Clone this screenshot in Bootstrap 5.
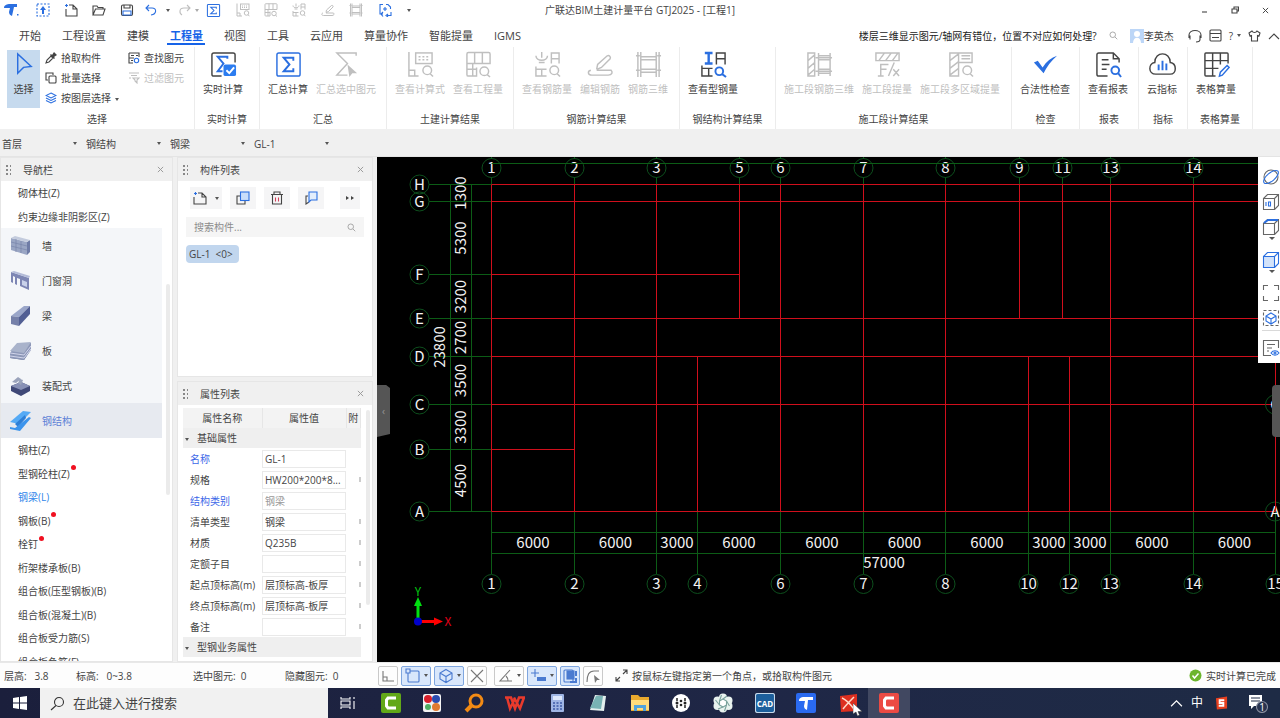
<!DOCTYPE html>
<html lang="zh-CN">
<head>
<meta charset="utf-8">
<meta name="viewport" content="width=device-width, initial-scale=1">
<title>广联达BIM土建计量平台 GTJ2025</title>
<link href="https://cdn.jsdelivr.net/npm/bootstrap@5.3.0/dist/css/bootstrap.min.css" rel="stylesheet">
<style>
:root{--ink:#444;--blue:#2b6fe0;--pale:#bfbfbf;--chrome:#f0f0f0}
body{font:10px/16px "Open Sans","Noto Sans CJK SC",sans-serif;color:var(--ink);background:#fff;height:100vh;min-height:600px;overflow:hidden}
button{border:0;background:none;padding:0;color:inherit;line-height:16px}
a{color:inherit;text-decoration:none}
svg{fill:none;stroke:currentColor;stroke-width:1.1;flex:none;display:block}
.fillic{fill:currentColor;stroke:none}
.thick{stroke-width:2}
.caret{width:0;height:0;border:2px solid transparent;border-top:3px solid #555;border-bottom:0;flex:none;vertical-align:middle}
.blue{color:var(--blue)}.pale{color:var(--pale)}.dim{color:#999}
.orange{color:#f28a14}.wps{color:#e93a2c}
/* title bar */
.titlebar{height:20px}
.logo-cell{width:29px;padding-left:3px}
.qa{width:28px;height:20px}.qa.wide{width:29px}
.qa-set{width:200px}
.winbtn{width:30px;height:18px}
/* tabs */
.tabs{height:27px;font-size:11px;gap:21px;padding-left:19px}
.tabs a{line-height:18px;padding:7px 0 0;height:26px;white-space:nowrap}
.tabs a.on{color:#1663e8;font-weight:700;position:relative}
.tabs a.on::after{content:"";position:absolute;left:-3px;right:-2px;bottom:1px;height:2px;background:#1663e8}
.tip-line{width:238px;overflow:hidden;color:#222}
.tip-find{margin:0 12px}
.usertools{margin-left:14px;gap:7px}
/* ribbon */
.ribbon{display:grid;grid-template-columns:195px 65px 127px 127px 166px 96px 236px 68px 59px 49px 65px 1fr;height:82px}
.rgroup{border-right:1px solid #ececec;padding:3px 0 0 8px;display:flex;flex-direction:column}
.rgroup:last-child{border:0}
.rgroup .tools{display:flex;gap:8px;height:59px}
.rgroup .tools.near{gap:5px}
.rgroup .cap{margin-left:-8px;text-align:center;line-height:20px}
.big{display:flex;flex-direction:column;align-items:center;gap:3px;white-space:nowrap;height:58px;padding-top:1px}
.big svg{width:27px;height:27px;stroke-width:1.5}
.big.sel{background:#c6daee;width:33px;margin-left:-1px}
.mini{display:flex;align-items:flex-start;gap:4px;height:20px;white-space:nowrap}
.mini svg{width:12px;height:12px;margin-top:2px}
.mini .caret{margin-top:8px}
/* combo bar */
.combos{height:28px;background:var(--chrome);border-bottom:1px solid #e4e4e4}
.combos select{width:84px;height:27px;border:0;padding:2px 14px 0 2px;background:var(--chrome) url("data:image/svg+xml,%3Csvg xmlns='http://www.w3.org/2000/svg' width='4' height='3'%3E%3Cpath d='M0 0h4L2 3z' fill='%23555'/%3E%3C/svg%3E") no-repeat 73px 13px;appearance:none;font-size:10px;color:var(--ink)}
/* docks */
.workspace{background:var(--chrome);gap:4px}
.dock{background:#fff;border:1px solid #e6e6e6;overflow:hidden}
.navdock{width:173px}
.sidecol{width:196px;gap:4px}
.dockhead{height:23px;background:var(--chrome);padding:0 8px 0 4px}
.grip{width:6px;height:12px;background:radial-gradient(circle,#888 1px,transparent 1px) 0 0/4px 4px}
.navlist{list-style:none;margin:0;padding:0}
.leaf li{height:24px;padding-left:17px;display:flex;align-items:center}
.leaf li:nth-child(even){height:23px}
.leaf .hot::after{content:"";width:5px;height:5px;border-radius:50%;background:#f01020;margin:0 0 12px 1px}
.leaf .cur{color:#2f86ea}
.cats{width:161px;background:#f4f6f9}
.cats a{height:35px;padding-left:8px;gap:11px;display:flex;align-items:center}
.cats svg{width:22px;height:22px}
.cats .cur{background:#e7eaf0;color:#5b7fd6}
.thumb{position:absolute;right:2px;width:4px;background:#ebebeb;border-radius:2px}
.toolrow{padding:6px 12px 0;gap:8px}
.tool{height:22px;background:#f5f5f6;width:26px;display:flex;align-items:center;justify-content:center}
.tool.slim{width:20px}
.tool svg{width:14px;height:14px}
.searchbox{background:#f5f5f5;height:20px}
.searchbox input,.props input{border:0;background:none;font-size:10px;color:var(--ink);outline:0;min-width:0}
.searchbox input::placeholder{color:#8c8c8c}
.pick{background:#c1d6ee;width:53px;height:18px;line-height:18px;padding-left:3px}
.upper{height:220px}
.props{width:178px;table-layout:fixed;border-collapse:collapse;margin:3px 0 0 5px}
.props .c1{width:79px}.props .c2{width:84px}
.props th,.props td{padding:0;font-weight:400;height:21px;line-height:16px}
.props thead th,.props .sect th{height:20px;background:#f3f3f3}
.props thead th{text-align:center;border-right:1px solid #e6e6e6}
.props tbody th{padding-left:7px}
.props .sect th{padding-left:2px;background:#efefef}
.props td:nth-child(2) input{width:84px;height:18px;border:1px solid #e9e9e9;padding:0 2px;text-overflow:ellipsis}
.props .key{color:#3c67e8}
.props input:disabled{color:#999}
.nub{display:block;width:2px;height:5px;background:#ccc;margin-left:auto}
/* drawing area */
.stage{background:#000;min-width:0}
.stage>svg{width:100%;height:100%}
.stage text{font:15px "Noto Sans CJK SC",sans-serif;fill:#f2f2f2;stroke:none;text-anchor:middle}
.stage .ax{stroke:#d00f1c;stroke-width:1}
.stage .dm{stroke:#0c5c16;stroke-width:1}
.stage .bub{stroke:#0d4f1d;stroke-width:1}
.stage .ucs{font-size:12px}
.pull{position:absolute;top:228px;width:13px;height:52px;background:#555;color:#999}
.pull.l{left:0;clip-path:polygon(0 0,70% 0,100% 6%,100% 94%,0 100%)}
.pull.r{right:0;width:8px;border-radius:4px 0 0 4px}
.viewbar{position:absolute;right:0;top:0;width:22px;height:206px;background:#fff;color:#666;overflow:hidden;padding:7px 0 0 4px}
.viewbar button{display:block;height:25px}
.viewbar svg{width:18px;height:18px}
.viewbar .caret{margin:-2px 0 7px 7px;border-width:3px}
.viewbar .caret+button{height:25px}
/* status */
.status{height:26px;background:#fdfdfd;border-top:1px solid #e8e8e8}
.sfield{white-space:pre}
.counts{display:grid;grid-template-columns:76px 117px 92px 93px}
.snaps{gap:3px}
.snap{width:20px;height:20px;border:1px solid #c9c9c9;border-radius:2px;display:flex;align-items:center;justify-content:center;gap:3px;color:#777}
.snap.drop{width:30px}
.snap.on{background:#d9e7fb;border-color:#7fa6df;color:#4a7ad0}
.snap svg{width:16px;height:16px}
.hint{margin-left:12px;gap:4px}
/* taskbar */
.taskbar{height:30px;background:linear-gradient(90deg,#1b1f3c,#1f2746 60%,#1e2b45);color:#fff}
.start{width:40px}
.tsearch{width:288px;background:#f1f1f1;color:#333;padding-left:10px;gap:8px}
.tsearch input{border:0;background:none;outline:0;font-size:13px;min-width:0}
.tsearch input::placeholder{color:#444;opacity:1}
.apps{width:540px;margin-left:2px}
.apps button.now{background:#414861}
.apps svg,.tray svg{width:20px;height:20px}
.apps .pointer{position:absolute;left:26px;top:15px;width:9px;height:13px}
.tray .small-ic{width:13px}
.tray .ime{font-size:12px}
</style>
<script src="https://cdn.jsdelivr.net/npm/bootstrap@5.3.0/dist/js/bootstrap.bundle.min.js"></script>
</head>
<body class="d-flex flex-column">
<svg width="0" height="0" class="position-absolute" aria-hidden="true">
  <symbol id="sigma" viewBox="0 0 16 16"><rect x="1.500" y="1.500" width="13" height="13" rx="1"/><path d="M11 6V4.500H5L8.500 8 5 11.500h6V10"/></symbol>
  <symbol id="calcgrid" viewBox="0 0 28 28"><path d="M12 17v9H3.500A1.500 1.500 0 0 1 2 24.500V3a1.500 1.500 0 0 1 1.500-1.500h21A1.500 1.500 0 0 1 26 3v10H2M10 1.500V13M18 1.500V13M8 13v13M2 19h10"/><circle cx="20" cy="21" r="4.500"/><path d="m23 24.500 3 2.500"/></symbol>
  <symbol id="formula" viewBox="0 0 28 28"><path d="M2 1v25h10M2 20h6v6"/><rect x="9" y="2" width="17" height="11"/><path d="M12 6h12M12 9h12" stroke-dasharray="2 2"/><circle cx="21" cy="20" r="4.500"/><path d="m24 23.500 3 3"/></symbol>
  <symbol id="rebarq" viewBox="0 0 28 28"><path d="M8 1v6M2 5c0 6 12 6 12 0M5 12h6M2 16v10h11M2 19h11M8 19v7M18 13V2h8v11M18 8h8"/><circle cx="21" cy="20" r="4.500"/><path d="m24 23.500 3 3"/></symbol>
  <symbol id="rebared" viewBox="0 0 28 28"><path d="m10 19 1-5L21 5c2-1 4 1 3 3l-9 9-5 2M4 20c-4 1-3 5 1 5h17c4 0 5-3 3-5H10"/></symbol>
  <symbol id="rebar3" viewBox="0 0 28 28"><path d="M3 1v26M25 1v26M6 1v26M22 1v26M6 6h16M6 9h16M6 19h16M6 22h16M1 5h4M1 20h4M23 5h4M23 20h4"/></symbol>
  <symbol id="mag" viewBox="0 0 12 12"><circle cx="5" cy="5" r="3.700"/><path d="m8 8 3 3"/></symbol>
  <symbol id="x" viewBox="0 0 8 8"><path d="m1 1 6 6M7 1 1 7"/></symbol>
  <symbol id="cube" viewBox="0 0 18 18"><path d="M1.500 5.500h11v11h-11zM1.500 5.500l4-4h11v11l-4 4M12.500 5.500l4-4"/></symbol>
</svg>

<header class="titlebar d-flex align-items-center position-relative">
  <div class="logo-cell"><svg class="fillic blue" width="17" height="16" viewBox="0 0 17 16"><path d="M1 6C1 3 4 2 7 2h7v3h-3l-2 9c-2-1-3-2-3-4l1-4zM14 12h1.500v1.500H14z"/></svg></div>
  <button class="qa d-flex align-items-center justify-content-center blue" aria-label="框选"><svg width="14" height="14" viewBox="0 0 14 14"><rect x="1" y="1" width="12" height="12" stroke-dasharray="2 1.500"/><path class="fillic" d="M7 3l3 4H8v4H6V7H4z"/></svg></button>
  <button class="qa d-flex align-items-center justify-content-center" aria-label="新建"><svg width="14" height="14" viewBox="0 0 14 14"><path d="M5 2h4l4 4v7H2V6M9 2v4h4"/><path class="blue" d="M2.500 1v3M1 2.500h3"/></svg></button>
  <button class="qa d-flex align-items-center justify-content-center" aria-label="打开"><svg width="14" height="14" viewBox="0 0 14 14"><path d="M1 12V3h4l1 1.500h5V6M1 12l2.500-6H13l-2 6z"/></svg></button>
  <button class="qa d-flex align-items-center justify-content-center" aria-label="保存"><svg width="14" height="14" viewBox="0 0 14 14"><rect x="1.500" y="2" width="11" height="10.500" rx="1.500"/><path d="M4 2v3h6V2"/><path class="blue" d="M3 8h8v4H3z"/></svg></button>
  <button class="qa wide d-flex align-items-center justify-content-end gap-2" aria-label="撤销"><svg class="blue" width="13" height="12" viewBox="0 0 13 12"><path d="M4 1 1 4l3 3M1 4h6c5 0 5 6-1 7"/></svg><span class="caret"></span></button>
  <button class="qa wide d-flex align-items-center justify-content-end gap-1 pale" aria-label="恢复"><svg width="13" height="12" viewBox="0 0 13 12"><path d="m9 1 3 3-3 3M12 4H6C1 4 1 9 4 11"/></svg><span class="caret opacity-50"></span></button>
  <div class="qa-set d-flex">
    <button class="flex-fill d-flex justify-content-center blue" aria-label="汇总计算"><svg width="15" height="15"><use href="#sigma"/></svg></button>
    <button class="flex-fill d-flex justify-content-center pale" aria-label="查看计算式"><svg class="thick" width="14" height="14" viewBox="0 0 28 28"><use href="#formula"/></svg></button>
    <button class="flex-fill d-flex justify-content-center pale" aria-label="查看工程量"><svg class="thick" width="14" height="14" viewBox="0 0 28 28"><use href="#calcgrid"/></svg></button>
    <button class="flex-fill d-flex justify-content-center pale" aria-label="查看钢筋量"><svg class="thick" width="14" height="14" viewBox="0 0 28 28"><use href="#rebarq"/></svg></button>
    <button class="flex-fill d-flex justify-content-center pale" aria-label="编辑钢筋"><svg class="thick" width="14" height="14" viewBox="0 0 28 28"><use href="#rebared"/></svg></button>
    <button class="flex-fill d-flex justify-content-center pale" aria-label="钢筋三维"><svg class="thick" width="14" height="14" viewBox="0 0 28 28"><use href="#rebar3"/></svg></button>
    <button class="flex-fill d-flex justify-content-center blue" aria-label="刷新"><svg width="14" height="14" viewBox="0 0 14 14"><path d="M5 1.500H2V11h3M8 1.500h2l2.500 2.500V6M9 12.500h4V9M5 13.500l-2-2.500 2-2M10 14l-2-1.500L10 11M5 6h4M7 4v4"/></svg></button>
  </div>
  <button class="p-1 ms-1" aria-label="自定义快速访问栏"><span class="caret d-block"></span></button>
  <div class="position-absolute start-50 translate-middle-x">广联达BIM土建计量平台 GTJ2025 - [工程1]</div>
  <div class="ms-auto d-flex">
    <button class="winbtn d-flex align-items-center justify-content-center" aria-label="最小化"><svg width="8" height="8"><path d="M1 6h5"/></svg></button>
    <button class="winbtn d-flex align-items-center justify-content-center" aria-label="还原"><svg width="8" height="8"><path d="M1 3h5v4H1zM3 3V1h4.500v4H6"/></svg></button>
    <button class="winbtn d-flex align-items-center justify-content-center" aria-label="关闭"><svg width="7" height="7" viewBox="0 0 8 8"><use href="#x"/></svg></button>
  </div>
</header>

<div class="d-flex align-items-center">
  <nav class="tabs d-flex">
    <a href="#">开始</a><a href="#">工程设置</a><a href="#">建模</a><a href="#" class="on">工程量</a><a href="#">视图</a><a href="#">工具</a><a href="#">云应用</a><a href="#">算量协作</a><a href="#">智能提量</a><a href="#">IGMS</a>
  </nav>
  <div class="ms-auto d-flex align-items-center pt-1">
    <a href="#" class="tip-line d-flex justify-content-end text-nowrap">楼层三维显示图元/轴网有错位，位置不对应如何处理?</a>
    <svg class="dim tip-find" width="9" height="9"><use href="#mag"/></svg>
    <svg width="14" height="14" viewBox="0 0 14 14" class="fillic"><path fill="#bcd6f7" d="M0 0h14v14H0z"/><circle cx="7" cy="5" r="3" fill="#fff"/><path fill="#fff" d="M3 14c0-7 8-7 8 0z"/></svg>
    <span>李英杰</span>
    <div class="usertools d-flex align-items-center">
    <svg width="14" height="14" viewBox="0 0 14 14"><path d="M1 9V6c0-6 12-6 12 0v3M2 6.500v4M12 6.500v4c0 2-2 2.500-4 2.500"/></svg>
    <svg width="13" height="13" viewBox="0 0 13 13"><rect x="1" y="1" width="11" height="11" rx="1"/><path d="M1 4.500h11M3 8.500h7" stroke-dasharray="11 0"/></svg>
    <span class="d-flex align-items-center gap-1">?<span class="caret"></span></span>
    <svg width="13" height="12" viewBox="0 0 13 12"><path d="M4 1 1 3l1 3 1.500-.5V11h6V5.500L11 6l1-3-3-2c-1 2-4 2-5 0z"/></svg>
    <svg width="12" height="8"><path d="m1 7 5-5 5 5"/></svg>
    </div>
  </div>
</div>

<section class="ribbon">
  <div class="rgroup"><div class="tools near">
    <button class="big sel"><svg class="blue" viewBox="0 0 28 28"><path d="M8 3v20l6-6 8-1z"/></svg>选择</button>
    <div>
      <button class="mini"><svg viewBox="0 0 12 12"><path d="m1 11 1-3 4-4 2 2-4 4z"/><path class="fillic" d="m5 3 1-1 1 1 2-3 3 3-3 2 1 1-1 1z"/></svg>拾取构件</button>
      <button class="mini"><svg viewBox="0 0 12 12"><path d="M3 8H1V1h7v2"/><rect x="4" y="4" width="7" height="7" rx="1"/></svg>批量选择</button>
      <button class="mini"><svg class="blue" viewBox="0 0 12 12"><path d="m6 1 5 2.500L6 6 1 3.500zM1 6l5 2.500L11 6M1 8.500 6 11l5-2.500"/></svg>按图层选择 <span class="caret"></span></button>
    </div>
    <div class="ps-1">
      <button class="mini"><svg viewBox="0 0 12 12"><path d="M1 1h10v4M1 1v10h4M3 3.500h3M8 3.500h2M1 6h5M3 8.500h2"/><circle class="blue" cx="8.500" cy="8.500" r="2.200"/></svg>查找图元</button>
      <button class="mini pale"><svg viewBox="0 0 12 12"><path d="M1 1h10M3 3.500h6M5 6h6L9 8v3L7 9V8zM1 6h2"/></svg>过滤图元</button>
    </div></div><div class="cap">选择</div></div>
  <div class="rgroup"><div class="tools"><button class="big"><svg viewBox="0 0 28 28"><path d="M12 26H4a2 2 0 0 1-2-2V4a2 2 0 0 1 2-2h20a2 2 0 0 1 2 2v8"/><path class="blue" d="M18 8V6H8l6 7-6 8h5" stroke-width="2"/><rect x="14" y="14" width="13" height="12" rx="2" fill="#2b7cf0" stroke="none"/><path stroke="#fff" stroke-width="2" d="m17 20 3 3 5-6"/></svg>实时计算</button></div><div class="cap">实时计算</div></div>
  <div class="rgroup"><div class="tools"><button class="big"><svg class="blue" viewBox="0 0 28 28"><rect x="2" y="2" width="24" height="24" rx="2"/><path stroke-width="2" d="M19 10V7H9l6 7-6 7h10v-3"/></svg><span>汇总计算</span></button><button class="big pale"><svg viewBox="0 0 28 28"><path d="M24 5V2H4l11 11L4 25h11"/><path class="fillic" d="m15 14 10 9-5 0-3 4z"/></svg>汇总选中图元</button></div><div class="cap">汇总</div></div>
  <div class="rgroup"><div class="tools"><button class="big pale"><svg><use href="#formula"/></svg>查看计算式</button><button class="big pale"><svg><use href="#calcgrid"/></svg>查看工程量</button></div><div class="cap">土建计算结果</div></div>
  <div class="rgroup"><div class="tools"><button class="big pale"><svg><use href="#rebarq"/></svg>查看钢筋量</button><button class="big pale"><svg><use href="#rebared"/></svg>编辑钢筋</button><button class="big pale"><svg><use href="#rebar3"/></svg>钢筋三维</button></div><div class="cap">钢筋计算结果</div></div>
  <div class="rgroup"><div class="tools"><button class="big"><svg viewBox="0 0 28 28"><path class="blue" stroke-width="2.500" d="M5 2h8M9 2v11M5 13h8"/><path d="M17 14V2h9v12M17 8h9M2 15v11h11M2 18h11M9 18v8"/><g class="blue" stroke-width="2"><circle cx="20" cy="21" r="4"/><path d="m23 24 4 3"/></g></svg>查看型钢量</button></div><div class="cap">钢结构计算结果</div></div>
  <div class="rgroup"><div class="tools"><button class="big pale"><svg viewBox="0 0 28 28"><path d="M2 2h7v24H2zM2 10l7-6M2 18l7-6M2 25l7-6M13 2v24M25 2v24M13 5h12M13 9h12M13 19h12M13 23h12M10 7h17M10 21h17"/></svg>施工段钢筋三维</button><button class="big pale"><svg viewBox="0 0 28 28"><path d="M2 2h24v8H2zM5 10l6-8M12 10l6-8M19 10l6-8M4 26h6M7 26V14h8M7 19h6M15 26l6-14M20 19l6 7M26 19l-6 7"/></svg>施工段提量</button><button class="big pale"><svg viewBox="0 0 28 28"><path d="M3 2h9v24H3zM3 10l9-7M3 18l9-7M3 25l9-7M12 2h14v10H12M15 5h9M15 8h9"/><circle cx="21" cy="20" r="4.500"/><path d="m24 23.500 3 3"/></svg>施工段多区域提量</button></div><div class="cap">施工段计算结果</div></div>
  <div class="rgroup"><div class="tools"><button class="big"><svg class="fillic blue" viewBox="0 0 28 28"><path d="m2 12 4-2 5 7C15 11 20 7 26 5 20 10 15 17 12 23z"/></svg>合法性检查</button></div><div class="cap">检查</div></div>
  <div class="rgroup"><div class="tools"><button class="big"><svg viewBox="0 0 28 28"><path d="M13 26H4a2 2 0 0 1-2-2V4a2 2 0 0 1 2-2h15l6 6v4M19 2v6h6M7 9h7M7 14h8M7 19h5"/><g class="blue" stroke-width="2"><circle cx="21" cy="20" r="4"/><path d="m24 23 3 4"/></g></svg>查看报表</button></div><div class="cap">报表</div></div>
  <div class="rgroup"><div class="tools"><button class="big"><svg viewBox="0 0 28 28"><path d="M7 24C-1 24-1 13 6 12 6 0 22 0 22 12c7 1 7 12 0 12z"/><path class="blue" stroke-width="2" d="M10 14v6M14 10v10M18 13v7"/></svg>云指标</button></div><div class="cap">指标</div></div>
  <div class="rgroup"><div class="tools"><button class="big"><svg viewBox="0 0 28 28"><path d="M26 13V3a1 1 0 0 0-1-1H3a1 1 0 0 0-1 1v22a1 1 0 0 0 1 1h10M2 10h24M2 18h14M10 2v24M18 2v12"/><path class="blue" d="m17 26 1-4 7-7 2 2-7 8z"/></svg>表格算量</button></div><div class="cap">表格算量</div></div>
  <div class="rgroup"></div>
</section>

<div class="combos d-flex">
  <select aria-label="楼层"><option>首层</option></select>
  <select aria-label="构件类别"><option>钢结构</option></select>
  <select aria-label="构件类型"><option>钢梁</option></select>
  <select aria-label="构件"><option>GL-1</option></select>
</div>

<main class="workspace d-flex flex-fill overflow-hidden">
  <aside class="dock navdock flex-shrink-0 position-relative">
    <div class="dockhead d-flex align-items-center"><span class="grip"></span><span class="ms-2 ps-1">导航栏</span><button class="ms-auto dim" aria-label="关闭导航栏"><svg width="7" height="7"><use href="#x"/></svg></button></div>
    <ul class="navlist leaf"><li><a href="#">砌体柱(Z)</a></li><li><a href="#">约束边缘非阴影区(Z)</a></li></ul>
    <nav class="cats">
      <a href="#"><svg class="fillic" viewBox="0 0 22 22"><path fill="#9aa6c4" d="M2 3l16 4v13L2 15z"/><path fill="#6f7ca6" d="m18 7 3-2v12l-3 3z"/><path fill="#c3cbdd" d="m2 3 4-2 15 4-3 2z"/><path stroke="#7885ab" stroke-width=".7" fill="none" d="M2 7l16 4M2 11l16 4M7 4v13M12 6v12"/></svg>墙</a>
      <a href="#"><svg class="fillic" viewBox="0 0 22 22"><path fill="#7d86b4" d="m2 2 18 6v12l-9-4V9L8 8v7l-2-1V7L4 6v7l-2-1z"/><path fill="#c9d2ea" d="m13 10 5 2v5l-5-2z"/><path fill="#b3bbd8" d="m2 2 3-1 16 5-1 2z"/></svg>门窗洞</a>
      <a href="#"><svg class="fillic" viewBox="0 0 22 22"><path fill="#9aa6c9" d="M2 11 15 1h6L10 12z"/><path fill="#7580a9" d="M2 11l8 1v9l-8-2z"/><path fill="#525f94" d="M10 12 21 1v8L10 21z"/></svg>梁</a>
      <a href="#"><svg class="fillic" viewBox="0 0 22 22"><path fill="#5e6a92" d="m1 18 7-7 14-2-7 11z"/><path fill="#8d98b8" d="m1 13 7-9 14-1v7l-7 10-14-2z"/><path fill="#a9b3cb" d="m1 11 7-8 14-1-7 11z"/><path stroke="#eef" stroke-width=".7" fill="none" d="m1 13 14 2 7-9M1 16l14 2 7-9"/></svg>板</a>
      <a href="#"><svg class="fillic" viewBox="0 0 22 22"><path fill="#3f4877" d="m2 11 10-4 9 4v5l-9 5-10-5z"/><path fill="#8790b5" d="m2 11 10-4 9 4-9 4z"/><path fill="#9aa3bb" d="M3 7 9 2l3 2-5 4zM9 8l2-4 3 1-2 5z"/></svg>装配式</a>
      <a href="#" class="cur"><svg class="fillic" viewBox="0 0 22 22"><path fill="#55aaf5" d="M1 12 14 1l8 1-12 12z"/><path fill="#2e7fd6" d="m6 14 10-9 1 3-8 9z"/><path fill="#3c94ec" d="m1 17 5 1L20 7l2 1-11 13-10-2z"/></svg>钢结构</a>
    </nav>
    <ul class="navlist leaf"><li><a href="#">钢柱(Z)</a></li><li class="hot"><a href="#">型钢砼柱(Z)</a></li><li class="cur"><a href="#">钢梁(L)</a></li><li class="hot"><a href="#">钢板(B)</a></li><li class="hot"><a href="#">栓钉</a></li><li><a href="#">桁架楼承板(B)</a></li><li><a href="#">组合板(压型钢板)(B)</a></li><li><a href="#">组合板(混凝土)(B)</a></li><li><a href="#">组合板受力筋(S)</a></li><li><a href="#">组合板负筋(F)</a></li></ul>
    <span class="thumb" style="top:25%;height:42%"></span>
  </aside>

  <div class="sidecol d-flex flex-column flex-shrink-0">
    <section class="dock upper">
      <div class="dockhead d-flex align-items-center"><span class="grip"></span><span class="ms-2 ps-1">构件列表</span><button class="ms-auto dim" aria-label="关闭构件列表"><svg width="7" height="7"><use href="#x"/></svg></button></div>
      <div class="toolrow d-flex">
        <button class="tool flex-fill gap-2" aria-label="新建"><svg viewBox="0 0 14 14"><path d="M5 2h4l4 4v7H1V6M9 2v4h4"/><path class="blue" d="M2.500 1v3M1 2.500h3"/></svg><span class="caret"></span></button>
        <button class="tool" aria-label="复制"><svg viewBox="0 0 14 14"><path d="M4 5H1v8h8v-3"/><rect class="blue" x="4.500" y="1" width="8.500" height="8.500" fill="#c9defa"/></svg></button>
        <button class="tool" aria-label="删除"><svg viewBox="0 0 14 14"><path d="M1 3.500h12M4 3V1h6v2M2.500 4v9h9V4"/><path stroke="#d0405a" d="M5.500 6.500v4M8.500 6.500v4"/></svg></button>
        <button class="tool" aria-label="层间复制"><svg viewBox="0 0 14 14"><path d="M4 5H2v8l3-2"/><path class="blue" d="M5 1h8v8H7l-2 2z" fill="#e3eefc"/></svg></button>
        <button class="tool slim ms-2" aria-label="更多"><svg class="fillic" viewBox="0 0 14 14"><path d="m3 5 3 2-3 2zM8 5l3 2-3 2z"/></svg></button>
      </div>
      <div class="searchbox d-flex align-items-center mx-2 mt-2 px-2"><input type="search" class="flex-fill p-0" aria-label="搜索构件" placeholder="搜索构件..."><svg class="dim" width="9" height="9"><use href="#mag"/></svg></div>
      <div class="px-2 mt-2"><a href="#" class="pick d-block rounded-1">GL-1&nbsp; &lt;0&gt;</a></div>
    </section>
    <section class="dock flex-fill position-relative">
      <div class="dockhead d-flex align-items-center"><span class="grip"></span><span class="ms-2 ps-1">属性列表</span><button class="ms-auto dim" aria-label="关闭属性列表"><svg width="7" height="7"><use href="#x"/></svg></button></div>
      <table class="props">
        <colgroup><col class="c1"><col class="c2"><col></colgroup>
        <thead><tr><th>属性名称</th><th>属性值</th><th>附</th></tr></thead>
        <tbody>
          <tr class="sect"><th colspan="3"><span class="caret d-inline-block me-2"></span>基础属性</th></tr>
          <tr><th><label class="key" for="p1">名称</label></th><td><input id="p1" value="GL-1"></td><td></td></tr>
          <tr><th><label for="p2">规格</label></th><td><input id="p2" value="HW200*200*8..."></td><td><span class="nub"></span></td></tr>
          <tr><th><label class="key" for="p3">结构类别</label></th><td><input id="p3" value="钢梁" disabled></td><td></td></tr>
          <tr><th><label for="p4">清单类型</label></th><td><input id="p4" value="钢梁"></td><td><span class="nub"></span></td></tr>
          <tr><th><label for="p5">材质</label></th><td><input id="p5" value="Q235B"></td><td><span class="nub"></span></td></tr>
          <tr><th><label for="p6">定额子目</label></th><td><input id="p6"></td><td><span class="nub"></span></td></tr>
          <tr><th><label for="p7">起点顶标高(m)</label></th><td><input id="p7" value="层顶标高-板厚"></td><td><span class="nub"></span></td></tr>
          <tr><th><label for="p8">终点顶标高(m)</label></th><td><input id="p8" value="层顶标高-板厚"></td><td><span class="nub"></span></td></tr>
          <tr><th><label for="p9">备注</label></th><td><input id="p9"></td><td><span class="nub"></span></td></tr>
          <tr class="sect"><th colspan="3"><span class="caret d-inline-block me-2"></span>型钢业务属性</th></tr>
        </tbody>
      </table>
      <span class="thumb" style="top:10%;height:70%"></span>
    </section>
  </div>

  <section class="stage flex-fill position-relative overflow-hidden">
    <svg id="plan" role="img" aria-label="轴网平面图"></svg>
    <button class="pull l" aria-label="收起左侧面板">‹</button>
    <button class="pull r" aria-label="展开右侧面板"></button>
    <div class="viewbar">
      <button aria-label="动态观察"><svg class="blue" viewBox="0 0 18 18"><circle cx="9" cy="9" r="7" stroke="#666"/><ellipse cx="9" cy="9" rx="9" ry="4" transform="rotate(-40 9 9)"/></svg></button>
      <button aria-label="二维三维切换"><svg viewBox="0 0 18 18"><use href="#cube"/><path class="blue" d="M4 9v4M6.500 9h2v4h-2z"/></svg></button>
      <button aria-label="视图方向"><svg viewBox="0 0 18 18"><use href="#cube"/><path class="blue" stroke-width="2" d="M2 5l4-3h10"/></svg></button><span class="caret d-block"></span>
      <button aria-label="显示样式" class="blue"><svg viewBox="0 0 18 18"><path fill="#d3e3fa" stroke="none" d="M1.500 5.500h11v11h-11z"/><use href="#cube"/></svg></button><span class="caret d-block"></span>
      <button aria-label="全屏"><svg viewBox="0 0 18 18"><path d="M1.500 6V1.500H6M12 1.500h4.500V6M16.500 12v4.500H12M6 16.500H1.500V12"/></svg></button>
      <button aria-label="局部三维"><svg viewBox="0 0 18 18"><rect x="1.500" y="1.500" width="15" height="15" stroke-dasharray="3 2"/><path class="blue" d="m9 4 5 3v5l-5 3-5-3V7zM4 7l5 3 5-3M9 10v5"/></svg></button>
      <hr class="m-0 mb-1">
      <button aria-label="显示设置"><svg viewBox="0 0 18 18"><path d="M9 16.500H1.500v-15h15V9M5 5.500h8M5 9h5M5 12h2"/><path class="blue" d="M9 14c2-3 6-3 8 0-2 3-6 3-8 0z"/><circle class="blue" cx="13" cy="14" r="1"/></svg></button>
    </div>
  </section>
</main>

<footer class="status d-flex align-items-center flex-shrink-0">
  <div class="counts"><span class="sfield ps-1">层高:   3.8</span><span class="sfield">标高:   0~3.8</span><span class="sfield">选中图元:  0</span><span class="sfield">隐藏图元:  0</span></div>
  <div class="snaps d-flex">
    <button class="snap" aria-label="正交"><svg viewBox="0 0 16 16"><path d="M3 3v10h11M3 9h4v4"/></svg></button>
    <button class="snap drop on" aria-label="矩形"><svg viewBox="0 0 16 16"><rect x="3" y="3" width="11" height="11" rx="1"/><path d="M1 1h4v4H1z" fill="#d9e7fb"/></svg><span class="caret"></span></button>
    <button class="snap drop on" aria-label="三维捕捉"><svg viewBox="0 0 16 16"><path d="m8 1.500 6 3.500v6l-6 3.500L2 11V5zM2 5l6 3.500L14 5M8 8.500v6"/></svg><span class="caret"></span></button>
    <button class="snap" aria-label="交点"><svg viewBox="0 0 16 16"><path d="m2 2 12 12M14 2 2 14"/></svg></button>
    <button class="snap drop ms-1" aria-label="角度"><svg viewBox="0 0 16 16"><path d="M12 2 2 13h12M8 8c1 1 2 3 2 5"/></svg><span class="caret"></span></button>
    <button class="snap drop on" aria-label="动态输入"><svg viewBox="0 0 16 16"><path d="M4 1v8M0 5h8"/><path class="fillic" d="M6 9h9v4H6z"/></svg><span class="caret"></span></button>
    <button class="snap on" aria-label="图层"><svg viewBox="0 0 16 16"><rect x="2" y="2" width="9" height="12" rx="1"/><rect x="5" y="3" width="7" height="8" fill="currentColor"/><path stroke-width="2" d="M14 3v5M14 10v4H8"/></svg></button>
    <button class="snap" aria-label="折线"><svg viewBox="0 0 16 16"><path d="M2 14C2 7 4 3 9 3h5"/><path class="fillic" d="M9 7l6 5-3 0-2 3z"/></svg></button>
  </div>
  <div class="hint d-flex align-items-center"><svg width="13" height="13" viewBox="0 0 13 13"><path d="m1 12 4-4M1 8v4h4M8 5l4-4M8 1h4v4"/></svg><span>按鼠标左键指定第一个角点，或拾取构件图元</span></div>
  <svg class="ms-auto me-1" width="13" height="13" viewBox="0 0 13 13"><circle cx="6.500" cy="6.500" r="6" fill="#6cb52d" stroke="none"/><path stroke="#fff" stroke-width="1.500" d="m3.500 6.500 2 2.500 4-4.500"/></svg><span class="pe-1">实时计算已完成</span>
</footer>

<div class="taskbar d-flex flex-shrink-0">
  <button class="start d-flex align-items-center justify-content-center" aria-label="开始"><svg class="fillic" width="14" height="14" viewBox="0 0 14 14"><path d="m0 2 6-1v5.500H0zM7 .9 14 0v6.500H7zM0 7.500h6V13l-6-1zM7 7.500h7V14l-7-.9z"/></svg></button>
  <label class="tsearch d-flex align-items-center"><svg width="15" height="15" viewBox="0 0 15 15"><circle cx="9" cy="6" r="4.500"/><path d="M6 9.500 1 14"/></svg><input type="search" class="flex-fill p-0" aria-label="搜索" placeholder="在此键入进行搜索"></label>
  <button class="start d-flex align-items-center justify-content-center" aria-label="任务视图"><svg width="16" height="14" viewBox="0 0 16 14"><path d="M1 1v2h9V1M1 13v-2h9v2M1 5h9v4H1zM14 1v2M14 5v8"/></svg></button>
  <div class="apps d-flex">
    <button class="flex-fill d-flex align-items-center justify-content-center" aria-label="Camtasia"><svg viewBox="0 0 20 20"><rect width="20" height="20" rx="2" fill="#62a818" stroke="none"/><path stroke="#fff" stroke-width="3" d="M15 5H7L5.500 7v6L7 15h8"/></svg></button>
    <button class="flex-fill d-flex align-items-center justify-content-center" aria-label="四色应用"><svg class="fillic" viewBox="0 0 20 20"><rect x="1" y="1" width="18" height="18" rx="2" fill="#f3f3f3"/><circle cx="6" cy="6" r="4" fill="#d8202c"/><circle cx="14" cy="6" r="4" fill="#2a4cb0"/><circle cx="6" cy="14" r="3" fill="#4fae62"/><circle cx="14" cy="14" r="4" fill="#e07a30"/></svg></button>
    <button class="flex-fill d-flex align-items-center justify-content-center orange" aria-label="查找"><svg viewBox="0 0 20 20"><circle cx="12" cy="8" r="6" stroke-width="3"/><path stroke-width="4" d="m8 12-6 6"/></svg></button>
    <button class="flex-fill d-flex align-items-center justify-content-center wps" aria-label="WPS"><svg viewBox="0 0 20 20"><path stroke-width="2.500" d="M0 4.500h6l4 11 4-11h5l-4 11-6-11M2 4.500l3 11 5-10"/></svg></button>
    <button class="flex-fill d-flex align-items-center justify-content-center" aria-label="计算器"><svg class="fillic" viewBox="0 0 20 20"><rect x="4" y="1" width="13" height="18" rx="1" fill="#9fb5e4"/><path fill="#dfe9fc" d="M6 3h9v4H6z"/><path stroke="#5570b5" stroke-width="2" stroke-dasharray="2 1.500" d="M6 10h9M6 13h9M6 16h9"/></svg></button>
    <button class="flex-fill d-flex align-items-center justify-content-center" aria-label="记事本"><svg class="fillic" viewBox="0 0 20 20"><path fill="#e3efee" d="m7 2 11 1-2 15-14-1z"/><path fill="#78b3b4" d="m8 3 7 0-2 13-11-1z"/></svg></button>
    <button class="flex-fill d-flex align-items-center justify-content-center" aria-label="文件资源管理器"><svg class="fillic" viewBox="0 0 20 20"><path fill="#e9a92e" d="M1 2h7l2 2h9v14H1z"/><path fill="#ffdc7c" d="M1 7h18v10H1z"/><path fill="#4fa3dd" d="M4 12h12v6h-3v-3H7v3H4z"/></svg></button>
    <button class="flex-fill d-flex align-items-center justify-content-center" aria-label="H 应用"><svg viewBox="0 0 20 20"><circle cx="10" cy="10" r="9" fill="#fff" stroke="none"/><path stroke="#222" stroke-width="1.500" d="M6 5v3M6 12v3M14 5v3M14 12v3"/><g fill="#222" stroke="none"><circle cx="6" cy="10" r="1.500"/><circle cx="14" cy="10" r="1.500"/><circle cx="10" cy="8" r="1.300"/><circle cx="10" cy="12" r="1.300"/></g></svg></button>
    <button class="flex-fill d-flex align-items-center justify-content-center" aria-label="花形应用"><svg class="fillic" viewBox="0 0 20 20"><g fill="#e9f3ef"><circle cx="10" cy="4.500" r="4"/><circle cx="10" cy="15.500" r="4"/><circle cx="4.500" cy="7.500" r="4"/><circle cx="15.500" cy="7.500" r="4"/><circle cx="4.500" cy="13" r="4"/><circle cx="15.500" cy="13" r="4"/></g><path stroke="#7aa29c" fill="#fff" d="m10 6 3.500 2v4L10 14l-3.500-2V8z"/><path stroke="#7aa29c" fill="none" d="m10 6 4-3M13.500 8l3 5M13.500 12l-2 6M10 14l-5 2M6.500 12l-4-5M6.500 8l2-6"/></svg></button>
    <button class="flex-fill d-flex align-items-center justify-content-center" aria-label="CAD"><svg viewBox="0 0 20 20"><rect x=".5" y=".5" width="19" height="19" rx="2" fill="#1c5f9c" stroke="#c6d9ea"/><text x="10" y="13.500" text-anchor="middle" font-size="8" font-weight="700" fill="#fff" stroke="none">CAD</text></svg></button>
    <button class="flex-fill d-flex align-items-center justify-content-center" aria-label="广联达"><svg class="fillic" viewBox="0 0 20 20"><rect width="20" height="20" rx="2" fill="#2a6af0"/><path fill="#fff" d="M3 8c0-3 2-4 5-4h9v3h-5l-1 10c-2-1-3-2-3-4l1-5z"/></svg></button>
    <button class="flex-fill d-flex align-items-center justify-content-center position-relative" aria-label="红色应用"><svg viewBox="0 0 20 20"><path fill="#dd2f1f" stroke="none" d="m2 3 17-2v17l-16 1z"/><path stroke="#ffd9c8" stroke-width="1.500" d="M4 5c5 2 8 6 12 11M16 4C12 8 8 12 5 16"/></svg><svg class="pointer" viewBox="0 0 9 13"><path d="M0 0v11l3-2 1.500 4 2-1L5 8.500h4z" fill="#fff" stroke="#333" stroke-width=".5"/></svg></button>
    <button class="now flex-fill d-flex align-items-center justify-content-center" aria-label="Camtasia 录制"><svg viewBox="0 0 20 20"><rect width="20" height="20" rx="2" fill="#ec4a43" stroke="none"/><path stroke="#fff" stroke-width="3" d="M15 5H7L5.500 7v6L7 15h8"/></svg></button>
  </div>
  <div class="tray ms-auto d-flex align-items-center gap-2 pe-2">
    <svg class="small-ic" viewBox="0 0 12 12"><path d="m1 9 5-5 5 5"/></svg><span class="ime">中</span>
    <svg class="small-ic ms-1 me-2" viewBox="0 0 14 14"><path fill="#e6401f" stroke="none" d="m1 2 12-2v13L2 14z"/><path stroke="#fff" stroke-width="2" d="M10 4H5v3h4v3H4"/></svg>
    <svg class="ms-1 me-1" viewBox="0 0 20 20"><path fill="#fff" stroke="none" d="M1 2h13v11H6l-3 3v-3H1z"/><path stroke="#1e2b45" d="M3 5h9M3 8h9"/><circle cx="14" cy="14" r="5.500" fill="#29344f" stroke="#8a90a0"/><text x="14" y="17.500" text-anchor="middle" font-size="10" fill="#fff" stroke="none">1</text></svg>
  </div>
</div>

<script>
// Axis grid: positions in millimetres from the corner of axes 1 and A.
const plan = document.getElementById('plan');
const scale = 0.01376, left = 115, base = 355;
const X = mm => Math.round(left + mm * scale) - 0.5;
const Y = mm => Math.round(base - mm * scale) - 0.5;
const rows = {A:0, B:4500, C:7800, D:11300, E:14000, F:17200, G:22500, H:23800};
const lowAxes = [[1,0],[2,6000],[3,12000],[4,15000],[6,21000],[7,27000],[8,33000],[10,39000],[12,42000],[13,45000],[14,51000],[15,57000]];
const topAxes = [[1,0],[2,6000],[3,12000],[5,18000],[6,21000],[7,27000],[8,33000],[9,38400],[11,41500],[13,45000],[14,51000],[15,57000]];
const partial = {4:['A','D'],10:['A','D'],12:['A','D'],5:['E','H'],9:['E','H'],11:['E','H']};
const rowEnd = {F:18000, B:6000};
let out = '';
const line = (c,x1,y1,x2,y2) => out += `<path class="${c}" d="M${x1} ${y1}L${x2} ${y2}"/>`;
const label = (t,x,y,turn) => out += `<text x="${x}" y="${y + 5}"${turn ? ` transform="rotate(-90 ${x} ${y})"` : ''}>${t}</text>`;
const bubble = (t,x,y) => { out += `<circle class="bub" cx="${x}" cy="${y}" r="9.500"/>`; label(t,x,y); };
for (const [n,mm] of lowAxes) { line('dm',X(mm),Y(0),X(mm),417); bubble(n,X(mm),427); }
for (const [n,mm] of topAxes) { line('dm',X(mm),20,X(mm),Y(23800)); line('dm',X(mm),0,X(mm),2); bubble(n,X(mm),11); }
for (const y of [375.5,396.5]) line('dm',X(0),y,X(57000),y);
line('dm',X(0),6.5,X(57000),6.5);
for (const x of [73.5,94.5]) line('dm',x,Y(0),x,Y(23800));
for (const [n,mm] of Object.entries(rows)) {
  line('dm',52,Y(mm),X(0),Y(mm));
  line('ax',X(0),Y(mm),X(rowEnd[n] || 57000),Y(mm));
  bubble(n,42.5,Y(mm));
}
bubble('C',898,Y(7800)); bubble('A',898,Y(0));
const cols = new Map([...lowAxes, ...topAxes]);
for (const [n,mm] of cols) { const [a,b] = partial[n] || ['A','H']; line('ax',X(mm),Y(rows[a]),X(mm),Y(rows[b])); }
lowAxes.slice(1).forEach(([,mm],i) => label(mm-lowAxes[i][1],(X(mm)+X(lowAxes[i][1]))/2,386));
topAxes.slice(1).forEach(([,mm],i) => label(mm-topAxes[i][1],(X(mm)+X(topAxes[i][1]))/2,-5));
const r = Object.values(rows);
r.slice(1).forEach((mm,i) => label(mm-r[i],84,(Y(mm)+Y(r[i]))/2,true));
label('23800',63,190,true);
label('57000',507,406);
out += '<path d="M41 464V446" stroke="#00e010" stroke-width="3"/><path d="M37 449l4-9 4 9z" fill="#00e010" stroke="none"/><path d="M41 464.500H59" stroke="#f00" stroke-width="3"/><path d="M57 460.500l9 4-9 4z" fill="#f00" stroke="none"/><circle cx="41" cy="464.500" r="4" fill="#00c" stroke="none"/>';
out += '<text class="ucs" x="41" y="439" style="fill:#00c010">Y</text><text class="ucs" x="71" y="469" style="fill:#e00018">X</text>';
plan.innerHTML = out;
</script>
</body>
</html>
